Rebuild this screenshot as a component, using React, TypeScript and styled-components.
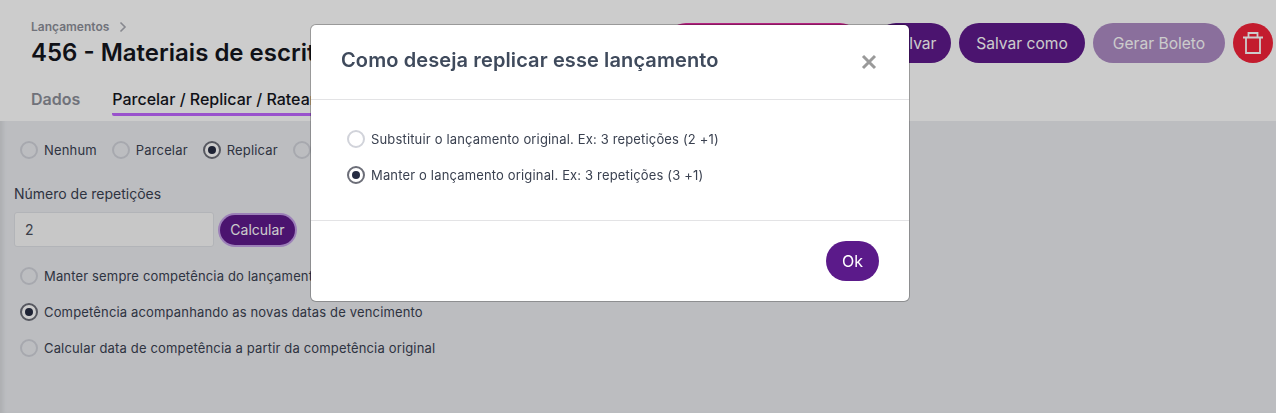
import { createGlobalStyle } from "styled-components";
import styled from "styled-components";

const GlobalStyle = createGlobalStyle`
  html, body {
    margin: 0;
    padding: 0;
    height: 100%;
    overflow: hidden;
    background: #ebedf1;
    font-family: "Inter", "Liberation Sans", sans-serif;
  }
`;

const Page = styled.div`
  height: 413px;
  display: flex;
  flex-direction: column;
  box-shadow: inset 5px 0 4px -2px rgba(0, 0, 0, 0.08);
`;

const Header = styled.header`
  height: 121px;
  box-sizing: border-box;
  background: #fff;
  padding: 18px 3px 0 31px;
  display: flex;
  flex-direction: column;
`;

const HeaderTop = styled.div`
  display: flex;
  justify-content: space-between;
  align-items: flex-start;
`;

const Breadcrumb = styled.div`
  display: flex;
  align-items: center;
  gap: 10px;
  font-size: 12px;
  font-weight: 600;
  line-height: 18px;
  color: #8d8f99;
`;

const Title = styled.h1`
  margin: 2px 0 0;
  font-size: 24px;
  font-weight: 600;
  line-height: 30px;
  color: #14161d;
  white-space: nowrap;
`;

const Actions = styled.div`
  display: flex;
  gap: 8px;
  margin-top: 5px;
`;

const ActionButton = styled.button<{ $tone?: string; $width: number; $disabled?: boolean }>`
  width: ${(p) => p.$width}px;
  height: 40px;
  border: none;
  border-radius: 20px;
  padding: 0;
  background: ${(p) => p.$tone || "#5e1a8b"};
  color: #fff;
  font-family: inherit;
  font-size: 15.6px;
  opacity: ${(p) => (p.$disabled ? 0.5 : 1)};
`;

const PinkButton = styled(ActionButton)`
  margin-right: 8px;
`;

const TrashButton = styled.button`
  width: 40px;
  height: 40px;
  border: none;
  border-radius: 50%;
  padding: 0;
  background: #f4233a;
  color: #fff;
  display: flex;
  align-items: center;
  justify-content: center;
`;

const Tabs = styled.nav`
  display: flex;
  gap: 32px;
  margin-top: 19px;
`;

const Tab = styled.div<{ $active?: boolean }>`
  height: 29px;
  box-sizing: border-box;
  font-size: 16px;
  font-weight: ${(p) => (p.$active ? 500 : 600)};
  line-height: 24px;
  color: ${(p) => (p.$active ? "#14161d" : "#8d8f99")};
  border-bottom: 3px solid ${(p) => (p.$active ? "#c066ff" : "transparent")};
  border-radius: 2px;
`;

const Content = styled.main`
  flex: 1;
  padding: 20px 14px 0;
  display: flex;
  flex-direction: column;
  align-items: flex-start;
`;

const RadioRow = styled.div`
  display: flex;
  gap: 15px;
  padding-left: 6px;
`;

const RadioOption = styled.label`
  display: flex;
  align-items: center;
  gap: 6px;
  height: 18px;
  font-size: 13px;
  letter-spacing: 0.16px;
  color: #3a4150;
  white-space: nowrap;
`;

const RadioCircle = styled.span<{ $checked?: boolean }>`
  width: 18px;
  height: 18px;
  box-sizing: border-box;
  flex: none;
  border-radius: 50%;
  background: ${(p) => (p.$checked ? "#fff" : "transparent")};
  border: 2px solid ${(p) => (p.$checked ? "#6c6e78" : "#d1d3da")};
  display: flex;
  align-items: center;
  justify-content: center;

  &::after {
    content: "";
    width: 8px;
    height: 8px;
    border-radius: 50%;
    background: ${(p) => (p.$checked ? "#262c42" : "transparent")};
  }
`;

const FieldLabel = styled.label`
  margin-top: 25px;
  font-size: 14px;
  line-height: 20px;
  color: #3a4150;
`;

const FieldRow = styled.div`
  display: flex;
  align-items: center;
  gap: 6px;
  margin-top: 8px;
`;

const NumberInput = styled.div`
  width: 200px;
  height: 35px;
  box-sizing: border-box;
  background: #f9f9f9;
  border: 1px solid #dfe1e6;
  border-radius: 3px;
  padding-left: 10px;
  font-size: 14px;
  line-height: 33px;
  color: #4a4f5c;
`;

const CalcButton = styled.button`
  width: 75px;
  height: 30px;
  border: none;
  border-radius: 15px;
  padding: 0;
  background: #5e1a8b;
  box-shadow: 0 0 0 2px #c4a0e6;
  color: #fff;
  font-family: inherit;
  font-size: 14px;
`;

const StackedOptions = styled.div`
  display: flex;
  flex-direction: column;
  gap: 18px;
  margin-top: 20px;
  padding-left: 6px;
`;

const Backdrop = styled.div`
  position: fixed;
  inset: 0;
  background: rgba(0, 0, 0, 0.2);
`;

const Modal = styled.div`
  position: fixed;
  top: 25px;
  left: 311px;
  width: 598px;
  height: 276px;
  background: #fff;
  border-radius: 5px;
  display: flex;
  flex-direction: column;
  box-shadow: 0 0 0 1px rgba(0, 0, 0, 0.25);
`;

const ModalHeader = styled.div`
  height: 70px;
  padding: 0 30px 4px;
  display: flex;
  align-items: center;
  justify-content: space-between;
  border-bottom: 1px solid #e3e3e5;
`;

const ModalTitle = styled.h2`
  margin: 0;
  font-size: 20px;
  font-weight: 600;
  letter-spacing: 0.11px;
  color: #3f4a5c;
`;

const CloseIcon = styled.svg`
  width: 16px;
  height: 16px;
  margin: 4px 2px 0 0;
  color: #9a9a9a;
`;

const ModalBody = styled.div`
  height: 121px;
  box-sizing: border-box;
  padding: 30px 36px 0;
  display: flex;
  flex-direction: column;
  gap: 18px;
  border-bottom: 1px solid #e3e3e5;
`;

const ModalFooter = styled.div`
  flex: 1;
  display: flex;
  justify-content: flex-end;
  align-items: center;
  padding-right: 30px;
`;

const OkButton = styled.button`
  width: 53px;
  height: 40px;
  border: none;
  border-radius: 20px;
  padding: 0;
  background: #5b1a8a;
  color: #fff;
  font-family: inherit;
  font-size: 16px;
`;

export default function App() {
  return (
    <>
      <GlobalStyle />
      <Page>
        <Header>
          <HeaderTop>
            <div>
              <Breadcrumb>
                Lançamentos
                <svg width="8" height="12" viewBox="0 0 8 12" fill="none" stroke="#a9abb3" strokeWidth="1.6">
                  <path d="M1.5 1.5 6 6l-4.500 4.500" />
                </svg>
              </Breadcrumb>
              <Title>456 - Materiais de escritório</Title>
            </div>
            <Actions>
              <PinkButton $tone="#e02c9f" $width={194}>Enviar para aprovação</PinkButton>
              <ActionButton $width={75}>Salvar</ActionButton>
              <ActionButton $width={126}>Salvar como</ActionButton>
              <ActionButton $width={132} $disabled>Gerar Boleto</ActionButton>
              <TrashButton aria-label="Excluir">
                <svg width="20" height="22" viewBox="0 0 20 22" fill="none" stroke="currentColor" strokeWidth="1.8">
                  <path d="M0 5.500h20M5.500 5.500V1h9v4.500M3 5.500V21h14V5.500" />
                </svg>
              </TrashButton>
            </Actions>
          </HeaderTop>
          <Tabs>
            <Tab>Dados</Tab>
            <Tab $active>Parcelar / Replicar / Ratear</Tab>
          </Tabs>
        </Header>
        <Content>
          <RadioRow>
            <RadioOption><RadioCircle />Nenhum</RadioOption>
            <RadioOption><RadioCircle />Parcelar</RadioOption>
            <RadioOption><RadioCircle $checked />Replicar</RadioOption>
            <RadioOption><RadioCircle />Ratear</RadioOption>
          </RadioRow>
          <FieldLabel>Número de repetições</FieldLabel>
          <FieldRow>
            <NumberInput>2</NumberInput>
            <CalcButton>Calcular</CalcButton>
          </FieldRow>
          <StackedOptions>
            <RadioOption><RadioCircle />Manter sempre competência do lançamento original</RadioOption>
            <RadioOption><RadioCircle $checked />Competência acompanhando as novas datas de vencimento</RadioOption>
            <RadioOption><RadioCircle />Calcular data de competência a partir da competência original</RadioOption>
          </StackedOptions>
        </Content>
      </Page>
      <Backdrop />
      <Modal>
        <ModalHeader>
          <ModalTitle>Como deseja replicar esse lançamento</ModalTitle>
          <CloseIcon viewBox="0 0 16 16" fill="none" stroke="currentColor" strokeWidth="3">
            <path d="M2 2l12 12M14 2 2 14" />
          </CloseIcon>
        </ModalHeader>
        <ModalBody>
          <RadioOption><RadioCircle />Substituir o lançamento original. Ex: 3 repetições (2 +1)</RadioOption>
          <RadioOption><RadioCircle $checked />Manter o lançamento original. Ex: 3 repetições (3 +1)</RadioOption>
        </ModalBody>
        <ModalFooter>
          <OkButton>Ok</OkButton>
        </ModalFooter>
      </Modal>
    </>
  );
}
